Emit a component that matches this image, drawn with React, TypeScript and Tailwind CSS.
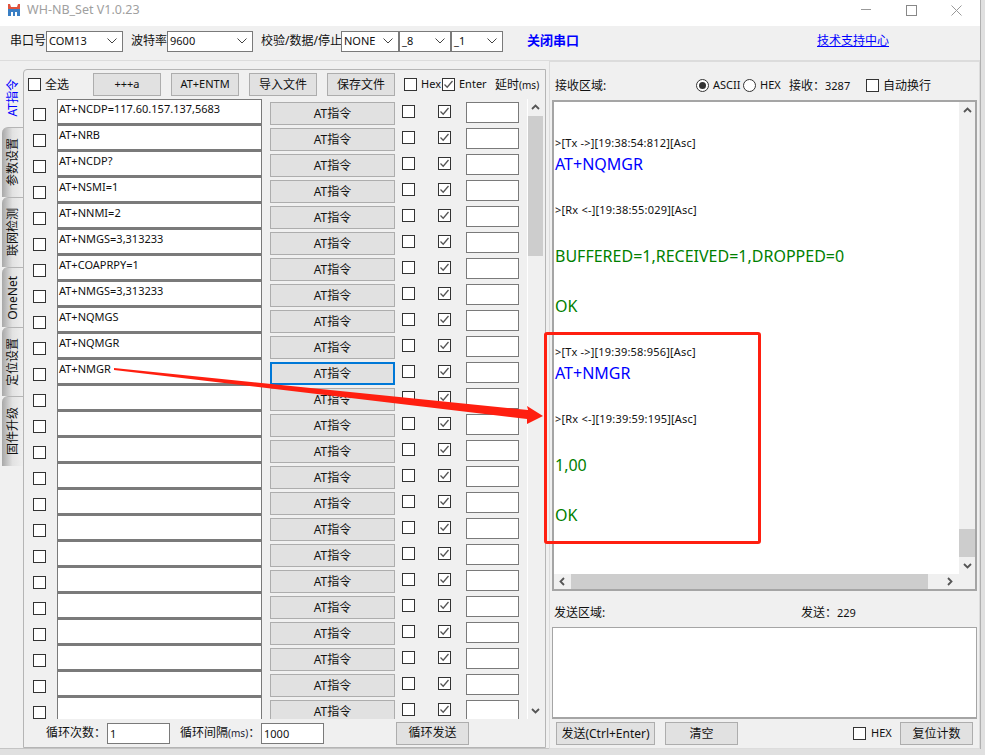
import React from 'react';

const FONT = "font-['Noto_Sans','Noto_Sans_CJK_SC',sans-serif]";

const commands = [
  'AT+NCDP=117.60.157.137,5683',
  'AT+NRB',
  'AT+NCDP?',
  'AT+NSMI=1',
  'AT+NNMI=2',
  'AT+NMGS=3,313233',
  'AT+COAPRPY=1',
  'AT+NMGS=3,313233',
  'AT+NQMGS',
  'AT+NQMGR',
  'AT+NMGR',
  '', '', '', '', '', '', '', '', '', '', '', '', '',
];

const tabs = [
  { label: '参数设置', h: 'h-[70px]' },
  { label: '联网检测', h: 'h-[70px]' },
  { label: 'OneNet', h: 'h-[60px]' },
  { label: '定位设置', h: 'h-[69px]' },
  { label: '固件升级', h: 'h-[70px]' },
];

const Check = ({ checked = false, className = '' }: { checked?: boolean; className?: string }) => (
  <div className={`w-[13px] h-[13px] shrink-0 border border-[#333] bg-white flex items-center justify-center ${className}`}>
    {checked && (
      <svg width="11" height="11" viewBox="0 0 11 11" fill="none">
        <path d="M1.5 5.5 L4.2 8.2 L9.5 2" stroke="#555" strokeWidth="1.3" />
      </svg>
    )}
  </div>
);

const Btn = ({ children, className = '', focused = false }: { children: React.ReactNode; className?: string; focused?: boolean }) => (
  <div
    className={`h-[23px] shrink-0 flex items-center justify-center bg-[#e1e1e1] text-[12px] text-[#111] ${
      focused ? 'border-2 border-[#0078d7]' : 'border border-[#adadad]'
    } ${className}`}
  >
    {children}
  </div>
);

const Select = ({ value, className = '' }: { value: string; className?: string }) => (
  <div className={`h-[21px] shrink-0 bg-white border border-[#7a7a7a] flex items-center justify-between pl-[2px] pr-[5px] text-[11px] text-[#111] ${className}`}>
    <span>{value}</span>
    <svg width="10" height="6" viewBox="0 0 10 6" fill="none">
      <path d="M0.5 0.5 L5 5 L9.5 0.5" stroke="#444" strokeWidth="1" />
    </svg>
  </div>
);

const Chevron = ({ dir }: { dir: 'up' | 'down' | 'left' | 'right' }) => {
  const d = {
    up: 'M1 6 L4.5 2.5 L8 6',
    down: 'M1 3 L4.5 6.5 L8 3',
    left: 'M6 1 L2.5 4.5 L6 8',
    right: 'M3 1 L6.5 4.5 L3 8',
  }[dir];
  return (
    <svg width="9" height="9" viewBox="0 0 9 9" fill="none">
      <path d={d} stroke="#555" strokeWidth="1.8" />
    </svg>
  );
};

const Row = ({ text, focused }: { text: string; focused: boolean }) => (
  <div className="h-[26px] shrink-0 flex items-start">
    <Check className="ml-[9px] mt-[9px]" />
    <div className="ml-[11px] w-[205px] h-[26px] bg-white border border-[#7a7a7a] border-b-2 pl-[1px] text-[11px] leading-[17px] text-[#111]">
      {text}
    </div>
    <Btn focused={focused} className="ml-[8px] w-[125px] mt-[3px]">AT指令</Btn>
    <Check className="ml-[7px] mt-[6px]" />
    <Check checked className="ml-[23px] mt-[6px]" />
    <div className="ml-[15px] mt-[3px] w-[53px] h-[21px] bg-white border border-[#7a7a7a]" />
  </div>
);

const Log = ({ children, className }: { children: React.ReactNode; className: string }) => <div className={className}>{children}</div>;

const small = 'h-[20px] leading-[20px] text-[11px] tracking-[0.2px] text-[#111]';
const blue = 'h-[22px] leading-[22px] text-[16px] text-[#0000ff]';
const green = 'h-[24px] leading-[24px] text-[16px] text-[#008000]';

export default function App() {
  return (
    <div className={`relative w-[985px] h-[755px] overflow-hidden bg-[#e0e0e0] ${FONT}`}>
      <div className="w-[981px] border-r border-[#b0b0b0]">
        {/* title bar */}
        <div className="h-[26px] bg-white flex items-center pb-[6px]">
          <svg className="ml-[7px]" width="14" height="14" viewBox="0 0 14 14">
            <path d="M1 1 L3 1 L4 4 L10 4 L11 1 L13 1 L13 6 L1 6 Z" fill="#e0533d" />
            <rect x="1" y="6" width="12" height="7" fill="#3a7fc4" />
            <rect x="4" y="9" width="2" height="4" fill="#fff" />
            <rect x="8" y="9" width="2" height="4" fill="#fff" />
          </svg>
          <span className="ml-[6px] text-[12.5px] text-[#a0a0a0]">WH-NB_Set V1.0.23</span>
          <svg className="ml-auto mr-[35px]" width="10" height="2" viewBox="0 0 10 2">
            <rect width="10" height="1" fill="#999" />
          </svg>
          <div className="mr-[34px] w-[11px] h-[11px] border border-[#888]" />
          <svg className="mr-[18px]" width="11" height="11" viewBox="0 0 11 11">
            <path d="M0.5 0.5 L10.5 10.5 M10.5 0.5 L0.5 10.5" stroke="#999" strokeWidth="1" />
          </svg>
        </div>

        <div className="h-[723px] bg-[#f0f0f0] border-b border-[#c4c4c4] text-[#111]">
          {/* serial toolbar */}
          <div className="h-[35px] flex items-center pb-[4px] text-[12px] border-b border-[#dcdcdc]">
            <span className="ml-[10px] w-[36px]">串口号</span>
            <Select value="COM13" className="w-[77px]" />
            <span className="ml-[8px] w-[36px]">波特率</span>
            <Select value="9600" className="w-[86px]" />
            <span className="ml-[8px] w-[80px] whitespace-nowrap">校验/数据/停止</span>
            <Select value="NONE" className="w-[58px]" />
            <Select value="_8" className="w-[52px]" />
            <Select value="_1" className="w-[52px]" />
            <span className="ml-[24px] text-[13px] font-bold text-[#0000ff]">关闭串口</span>
            <span className="ml-[238px] text-[#0000ff] underline">技术支持中心</span>
          </div>

          <div className="flex h-[687px]">
            {/* side tabs */}
            <div className="w-[23px] shrink-0 pt-[8px] pl-[2px] flex flex-col">
              <div className="h-[58px] flex items-center justify-center text-[12px] text-[#0000ff]">
                <span className="[writing-mode:vertical-rl] [text-orientation:sideways] rotate-180 whitespace-nowrap">AT指令</span>
              </div>
              {tabs.map((t) => (
                <div
                  key={t.label}
                  className={`${t.h} w-[21px] flex items-center justify-center text-[12px] text-[#111] border-t border-[#b5b5b5] rounded-tl-[6px] bg-gradient-to-r from-[#a8a8a8] via-[#e2e2e2] to-[#efefef]`}
                >
                  <span className="[writing-mode:vertical-rl] [text-orientation:sideways] rotate-180 whitespace-nowrap">{t.label}</span>
                </div>
              ))}
            </div>

            {/* AT command panel */}
            <div className="w-[523px] h-[679px] mt-[8px] shrink-0 border border-[#b5b5b5] rounded-tl-[4px] flex flex-col">
              <div className="h-[29px] shrink-0 flex items-center text-[12px]">
                <Check className="ml-[4px]" />
                <span className="ml-[4px] w-[48px]">全选</span>
                <Btn className="w-[68px]"><span className="text-[11px]">+++a</span></Btn>
                <Btn className="ml-[10px] w-[68px]"><span className="text-[11px]">AT+ENTM</span></Btn>
                <Btn className="ml-[10px] w-[68px]">导入文件</Btn>
                <Btn className="ml-[10px] w-[68px]">保存文件</Btn>
                <Check className="ml-[9px]" />
                <span className="ml-[4px] w-[21px] text-[11px]">Hex</span>
                <Check checked />
                <span className="ml-[4px] w-[36px] text-[11px]">Enter</span>
                <span className="whitespace-nowrap">延时<span className="text-[10px]">(ms)</span></span>
              </div>
              <div className="flex h-[620px] shrink-0">
                <div className="w-[503px] h-[620px] overflow-hidden flex flex-col">
                  {commands.map((c, i) => (
                    <Row key={i} text={c} focused={i === 10} />
                  ))}
                </div>
                <div className="w-[16px] bg-[#f0f0f0] border-l border-white flex flex-col items-center">
                  <div className="h-[17px] flex items-center">
                    <Chevron dir="up" />
                  </div>
                  <div className="w-full h-[140px] bg-[#cdcdcd]" />
                  <div className="mt-auto h-[17px] flex items-center">
                    <Chevron dir="down" />
                  </div>
                </div>
              </div>
              <div className="flex items-center h-[28px] text-[12px]">
                <span className="ml-[22px] w-[61px]">循环次数：</span>
                <div className="w-[63px] h-[21px] bg-white border border-[#7a7a7a] pl-[2px] leading-[19px] text-[11px]">1</div>
                <span className="ml-[10px] w-[81px] whitespace-nowrap">循环间隔<span className="text-[10px] text-[#223]">(ms)</span>：</span>
                <div className="w-[63px] h-[21px] bg-white border border-[#7a7a7a] pl-[2px] leading-[19px] text-[11px]">1000</div>
                <Btn className="ml-[72px] w-[73px]">循环发送</Btn>
              </div>
            </div>

            {/* receive and send areas */}
            <div className="ml-[3px] w-[431px] h-[688px] border border-[#dcdcdc] flex flex-col text-[12px] -mb-px">
              <div className="h-[37px] mt-[1px] shrink-0 flex items-center pt-[8px]">
                <span className="ml-[5px] w-[141px]">接收区域:</span>
                <div className="w-[13px] h-[13px] rounded-full border border-[#333] bg-white flex items-center justify-center">
                  <div className="w-[7px] h-[7px] rounded-full bg-[#333]" />
                </div>
                <span className="ml-[4px] w-[30px] text-[11px]">ASCII</span>
                <div className="w-[13px] h-[13px] rounded-full border border-[#333] bg-white" />
                <span className="ml-[4px] w-[29px] text-[11px]">HEX</span>
                <span className="whitespace-nowrap w-[77px]">接收：<span className="text-[11px]">3287</span></span>
                <Check />
                <span className="ml-[4px]">自动换行</span>
              </div>
              <div className="ml-[2px] w-[425px] h-[491px] shrink-0 border-2 border-[#a5a5a5] bg-white flex flex-col">
                <div className="flex flex-1 min-h-0">
                  <div className="flex-1 pl-[1px] pt-[31px] overflow-hidden">
                    <Log className={small}>&gt;[Tx -&gt;][19:38:54:812][Asc]</Log>
                    <Log className={blue}>AT+NQMGR</Log>
                    <Log className={`${small} mt-[25px]`}>&gt;[Rx &lt;-][19:38:55:029][Asc]</Log>
                    <Log className={`${green} mt-[24px]`}>BUFFERED=1,RECEIVED=1,DROPPED=0</Log>
                    <Log className={`${green} mt-[26px]`}>OK</Log>
                    <Log className={`${small} mt-[24px]`}>&gt;[Tx -&gt;][19:39:58:956][Asc]</Log>
                    <Log className={blue}>AT+NMGR</Log>
                    <Log className={`${small} mt-[25px]`}>&gt;[Rx &lt;-][19:39:59:195][Asc]</Log>
                    <Log className={`${green} mt-[24px]`}>1,00</Log>
                    <Log className={`${green} mt-[26px]`}>OK</Log>
                  </div>
                  <div className="w-[16px] bg-[#f0f0f0] flex flex-col items-center">
                    <div className="h-[17px] flex items-center">
                      <Chevron dir="up" />
                    </div>
                    <div className="w-full h-[28px] mt-auto bg-[#cdcdcd]" />
                    <div className="h-[17px] flex items-center">
                      <Chevron dir="down" />
                    </div>
                  </div>
                </div>
                <div className="h-[15px] shrink-0 bg-[#f0f0f0] flex items-center">
                  <div className="w-[17px] flex justify-center">
                    <Chevron dir="left" />
                  </div>
                  <div className="w-[357px] h-full bg-[#cdcdcd]" />
                  <div className="ml-[13px] w-[17px] flex justify-center">
                    <Chevron dir="right" />
                  </div>
                </div>
              </div>
              <div className="h-[36px] shrink-0 flex items-center pt-[7px]">
                <span className="ml-[4px] w-[247px]">发送区域:</span>
                <span className="whitespace-nowrap">发送：<span className="text-[11px]">229</span></span>
              </div>
              <div className="ml-[2px] w-[425px] h-[92px] shrink-0 bg-white border border-[#a5a5a5] border-b-2" />
              <div className="flex-1 flex items-center">
                <Btn className="ml-[6px] w-[99px]">发送(Ctrl+Enter)</Btn>
                <Btn className="ml-[10px] w-[73px]">清空</Btn>
                <Check className="ml-[115px]" />
                <span className="ml-[5px] w-[29px] text-[11px]">HEX</span>
                <Btn className="w-[73px]">复位计数</Btn>
              </div>
            </div>
          </div>
        </div>
      </div>

      {/* red annotation over the screenshot */}
      <div className="absolute left-[544px] top-[332px] w-[217px] h-[212px] border-[3px] border-[#ff1f10] rounded-[3px]" />
      <svg className="absolute left-0 top-0 pointer-events-none" width="985" height="755" viewBox="0 0 985 755">
        <polygon points="114,368 528,410 527,406 543,416 527,424 527,419 114,370" fill="#ff1f10" />
      </svg>
    </div>
  );
}
